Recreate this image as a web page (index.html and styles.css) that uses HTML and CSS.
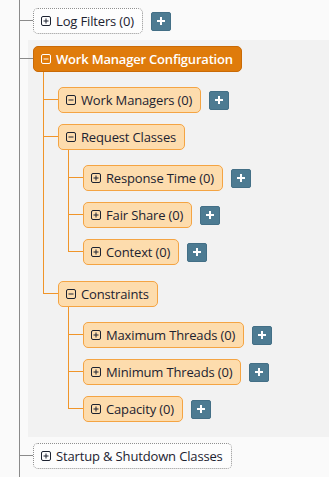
FILE: index.html
```html
<!DOCTYPE html>
<html lang="en">

<head>
    <meta charset="UTF-8">
    <meta name="viewport" content="width=device-width, initial-scale=1.0">
    <title>Work Manager Configuration</title>
    <link rel="stylesheet" href="styles.css">
</head>

<body>

    <ul class="tree">
        <li class="tree-item">
            <div class="node-row">
                <span class="node node-empty">
                    <svg class="toggle" viewBox="0 0 10 10"><rect x="0.5" y="0.5" width="9" height="9" rx="1.5"/><path d="M2.5 5h5M5 2.5v5"/></svg>
                    Log Filters (0)
                </span>
                <button class="add-btn" type="button"><svg viewBox="0 0 8 8"><path d="M4 0v8M0 4h8"/></svg></button>
            </div>
        </li>

        <li class="tree-item tree-panel">
            <div class="node-row">
                <span class="node node-root">
                    <svg class="toggle" viewBox="0 0 10 10"><rect x="0.5" y="0.5" width="9" height="9" rx="1.5"/><path d="M2.5 5h5"/></svg>
                    Work Manager Configuration
                </span>
            </div>

            <ul class="branch">
                <li class="branch-item">
                    <div class="node-row">
                        <span class="node">
                            <svg class="toggle" viewBox="0 0 10 10"><rect x="0.5" y="0.5" width="9" height="9" rx="1.5"/><path d="M2.5 5h5"/></svg>
                            Work Managers (0)
                        </span>
                        <button class="add-btn" type="button"><svg viewBox="0 0 8 8"><path d="M4 0v8M0 4h8"/></svg></button>
                    </div>
                </li>

                <li class="branch-item">
                    <div class="node-row">
                        <span class="node">
                            <svg class="toggle" viewBox="0 0 10 10"><rect x="0.5" y="0.5" width="9" height="9" rx="1.5"/><path d="M2.5 5h5"/></svg>
                            Request Classes
                        </span>
                    </div>
                    <ul class="branch">
                        <li class="branch-item">
                            <div class="node-row">
                                <span class="node">
                                    <svg class="toggle" viewBox="0 0 10 10"><rect x="0.5" y="0.5" width="9" height="9" rx="1.5"/><path d="M2.5 5h5M5 2.5v5"/></svg>
                                    Response Time (0)
                                </span>
                                <button class="add-btn" type="button"><svg viewBox="0 0 8 8"><path d="M4 0v8M0 4h8"/></svg></button>
                            </div>
                        </li>
                        <li class="branch-item">
                            <div class="node-row">
                                <span class="node">
                                    <svg class="toggle" viewBox="0 0 10 10"><rect x="0.5" y="0.5" width="9" height="9" rx="1.5"/><path d="M2.5 5h5M5 2.5v5"/></svg>
                                    Fair Share (0)
                                </span>
                                <button class="add-btn" type="button"><svg viewBox="0 0 8 8"><path d="M4 0v8M0 4h8"/></svg></button>
                            </div>
                        </li>
                        <li class="branch-item">
                            <div class="node-row">
                                <span class="node">
                                    <svg class="toggle" viewBox="0 0 10 10"><rect x="0.5" y="0.5" width="9" height="9" rx="1.5"/><path d="M2.5 5h5M5 2.5v5"/></svg>
                                    Context (0)
                                </span>
                                <button class="add-btn" type="button"><svg viewBox="0 0 8 8"><path d="M4 0v8M0 4h8"/></svg></button>
                            </div>
                        </li>
                    </ul>
                </li>

                <li class="branch-item">
                    <div class="node-row">
                        <span class="node">
                            <svg class="toggle" viewBox="0 0 10 10"><rect x="0.5" y="0.5" width="9" height="9" rx="1.5"/><path d="M2.5 5h5"/></svg>
                            Constraints
                        </span>
                    </div>
                    <ul class="branch">
                        <li class="branch-item">
                            <div class="node-row">
                                <span class="node">
                                    <svg class="toggle" viewBox="0 0 10 10"><rect x="0.5" y="0.5" width="9" height="9" rx="1.5"/><path d="M2.5 5h5M5 2.5v5"/></svg>
                                    Maximum Threads (0)
                                </span>
                                <button class="add-btn" type="button"><svg viewBox="0 0 8 8"><path d="M4 0v8M0 4h8"/></svg></button>
                            </div>
                        </li>
                        <li class="branch-item">
                            <div class="node-row">
                                <span class="node">
                                    <svg class="toggle" viewBox="0 0 10 10"><rect x="0.5" y="0.5" width="9" height="9" rx="1.5"/><path d="M2.5 5h5M5 2.5v5"/></svg>
                                    Minimum Threads (0)
                                </span>
                                <button class="add-btn" type="button"><svg viewBox="0 0 8 8"><path d="M4 0v8M0 4h8"/></svg></button>
                            </div>
                        </li>
                        <li class="branch-item">
                            <div class="node-row">
                                <span class="node">
                                    <svg class="toggle" viewBox="0 0 10 10"><rect x="0.5" y="0.5" width="9" height="9" rx="1.5"/><path d="M2.5 5h5M5 2.5v5"/></svg>
                                    Capacity (0)
                                </span>
                                <button class="add-btn" type="button"><svg viewBox="0 0 8 8"><path d="M4 0v8M0 4h8"/></svg></button>
                            </div>
                        </li>
                    </ul>
                </li>
            </ul>
        </li>

        <li class="tree-item">
            <div class="node-row">
                <span class="node node-empty">
                    <svg class="toggle" viewBox="0 0 10 10"><rect x="0.5" y="0.5" width="9" height="9" rx="1.5"/><path d="M2.5 5h5M5 2.5v5"/></svg>
                    Startup &amp; Shutdown Classes
                </span>
            </div>
        </li>
    </ul>

</body>

</html>
```

FILE: styles.css
```css
body {
    margin: 0;
    background-color: #fafafa;
    font-family: "Open Sans", Arial, sans-serif;
    font-size: 13px;
    letter-spacing: -0.15px;
    color: #1c2230;
    overflow: hidden;
}

.tree {
    list-style: none;
    margin: 0 0 0 19px;
    padding: 8px 0 0 0;
    border-left: 1px solid #8a8a8a;
    min-height: 100vh;
    box-sizing: border-box;
}

.tree-item {
    position: relative;
    padding-left: 13px;
    margin-bottom: 6px;
}

.tree-item::before {
    content: '';
    position: absolute;
    left: 0;
    top: 12px;
    width: 13px;
    border-top: 1px solid #8a8a8a;
}

.tree-panel {
    margin-left: 8px;
    padding: 6px 0 5px 5px;
    background-color: #f2f2f2;
}

.tree-panel::before {
    left: -8px;
    top: 18px;
}

.node-row {
    display: flex;
    align-items: center;
    gap: 8px;
}

.node {
    display: inline-flex;
    align-items: center;
    gap: 5px;
    height: 26px;
    box-sizing: border-box;
    padding: 0 8px 0 7px;
    border: 1px solid #f4a443;
    border-radius: 5px;
    background-color: #fddcad;
    white-space: nowrap;
}

.node-empty {
    border: 1px dotted #8f8f8f;
    background-color: #fdfdfd;
}

.node-root {
    border-color: #c96a06;
    background-color: #df7b0b;
    color: #fff;
    font-weight: 600;
    letter-spacing: -0.2px;
}

.toggle {
    width: 10px;
    height: 10px;
    flex: none;
    fill: none;
    stroke: currentColor;
    stroke-width: 1;
}

.add-btn {
    width: 20px;
    height: 19px;
    padding: 0;
    display: flex;
    align-items: center;
    justify-content: center;
    background-color: #4d7b92;
    border: 1px solid #436f86;
    border-radius: 2px;
    cursor: pointer;
}

.add-btn svg {
    width: 8px;
    height: 8px;
    stroke: #fff;
    stroke-width: 2;
}

.branch {
    list-style: none;
    margin: 0;
    padding: 0 0 5px 10px;
}

.branch-item {
    position: relative;
    padding: 11px 0 0 15px;
}

.branch-item:first-child {
    padding-top: 15px;
}

.branch-item::before {
    content: '';
    position: absolute;
    left: 0;
    top: 0;
    width: 14px;
    height: 23px;
    border-left: 1px solid #f0952a;
    border-bottom: 1px solid #f0952a;
}

.branch-item:first-child::before {
    height: 27px;
}

.branch-item:not(:last-child)::after {
    content: '';
    position: absolute;
    left: 0;
    top: 0;
    bottom: 0;
    border-left: 1px solid #f0952a;
}
```
